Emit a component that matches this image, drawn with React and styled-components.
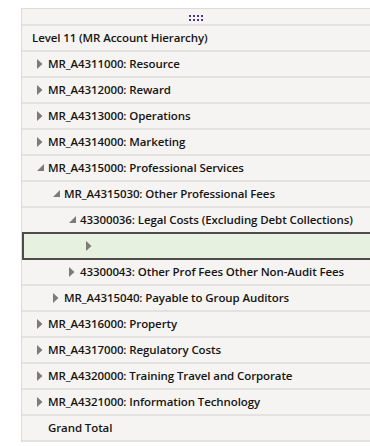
import React from "react";
import styled, { createGlobalStyle } from "styled-components";

const GlobalStyle = createGlobalStyle`
  html, body {
    margin: 0;
    padding: 0;
    background: #ffffff;
  }
`;

const Page = styled.div`
  padding: 8px 0 0 21px;
  font-family: "Open Sans", "Noto Sans", sans-serif;
`;

const Table = styled.div`
  width: 348px;
  border-left: 1px solid #dedcd9;
  border-right: 1px solid #dedcd9;
  border-top: 1px solid #dedcd9;
  background: #f5f4f2;
  overflow: hidden;
`;

const GripRow = styled.div`
  height: 15px;
  display: flex;
  justify-content: center;
  align-items: center;
  border-bottom: 2px solid #e4e2df;
`;

const Grip = styled.div`
  display: grid;
  grid-template-columns: repeat(4, 2px);
  grid-template-rows: repeat(2, 2px);
  column-gap: 2px;
  row-gap: 2px;
  margin-top: 2px;

  span {
    background: #3f2f8c;
    box-shadow: inset 1px 0 0 #8c3350;
  }
`;

const Row = styled.div`
  height: 26px;
  box-sizing: border-box;
  display: flex;
  align-items: center;
  padding-left: ${(p) => p.$indent}px;
  padding-bottom: 1px;
  border-bottom: 2px solid #e4e2df;
  color: #161513;
  font-size: 11.5px;
  font-weight: 600;
  white-space: nowrap;
`;

const FocusRow = styled.div`
  height: 28px;
  box-sizing: border-box;
  display: flex;
  align-items: center;
  padding-left: ${(p) => p.$indent}px;
  background: #e6f1df;
  border: 2px solid #4d4c4a;
  border-right: none;
  margin-top: -2px;
  width: 360px;
`;

const Twisty = styled.span`
  width: 11px;
  height: 10px;
  flex: none;
  display: flex;
  align-items: center;
`;

const Label = styled.span`
  letter-spacing: -0.1px;
`;

function Arrow({ open }) {
  return (
    <Twisty>
      {open ? (
        <svg width="7" height="7" viewBox="0 0 7 7">
          <polygon points="7,0 7,7 0,7" fill="#7d7b78" />
        </svg>
      ) : (
        <svg width="6" height="10" viewBox="0 0 6 10">
          <polygon points="0,0 5.5,5 0,10" fill="#7d7b78" />
        </svg>
      )}
    </Twisty>
  );
}

const rows = [
  { level: 1, label: "MR_A4311000: Resource" },
  { level: 1, label: "MR_A4312000: Reward" },
  { level: 1, label: "MR_A4313000: Operations" },
  { level: 1, label: "MR_A4314000: Marketing" },
  { level: 1, label: "MR_A4315000: Professional Services", open: true },
  { level: 2, label: "MR_A4315030: Other Professional Fees", open: true },
  { level: 3, label: "43300036: Legal Costs (Excluding Debt Collections)", open: true },
  { level: 4, label: "", focus: true },
  { level: 3, label: "43300043: Other Prof Fees Other Non-Audit Fees" },
  { level: 2, label: "MR_A4315040: Payable to Group Auditors" },
  { level: 1, label: "MR_A4316000: Property" },
  { level: 1, label: "MR_A4317000: Regulatory Costs" },
  { level: 1, label: "MR_A4320000: Training Travel and Corporate" },
  { level: 1, label: "MR_A4321000: Information Technology" },
];

export default function App() {
  return (
    <Page>
      <GlobalStyle />
      <Table>
        <GripRow>
          <Grip>
            {Array.from({ length: 8 }).map((_, i) => (
              <span key={i} />
            ))}
          </Grip>
        </GripRow>
        <Row $indent={10}>
          <Label>Level 11 (MR Account Hierarchy)</Label>
        </Row>
        {rows.map((r, i) =>
          r.focus ? (
            <FocusRow key={i} $indent={16 * r.level - 2}>
              <Arrow />
            </FocusRow>
          ) : (
            <Row key={i} $indent={16 * r.level - 1}>
              <Arrow open={r.open} />
              <Label>{r.label}</Label>
            </Row>
          )
        )}
        <Row $indent={26}>
          <Label>Grand Total</Label>
        </Row>
      </Table>
    </Page>
  );
}
